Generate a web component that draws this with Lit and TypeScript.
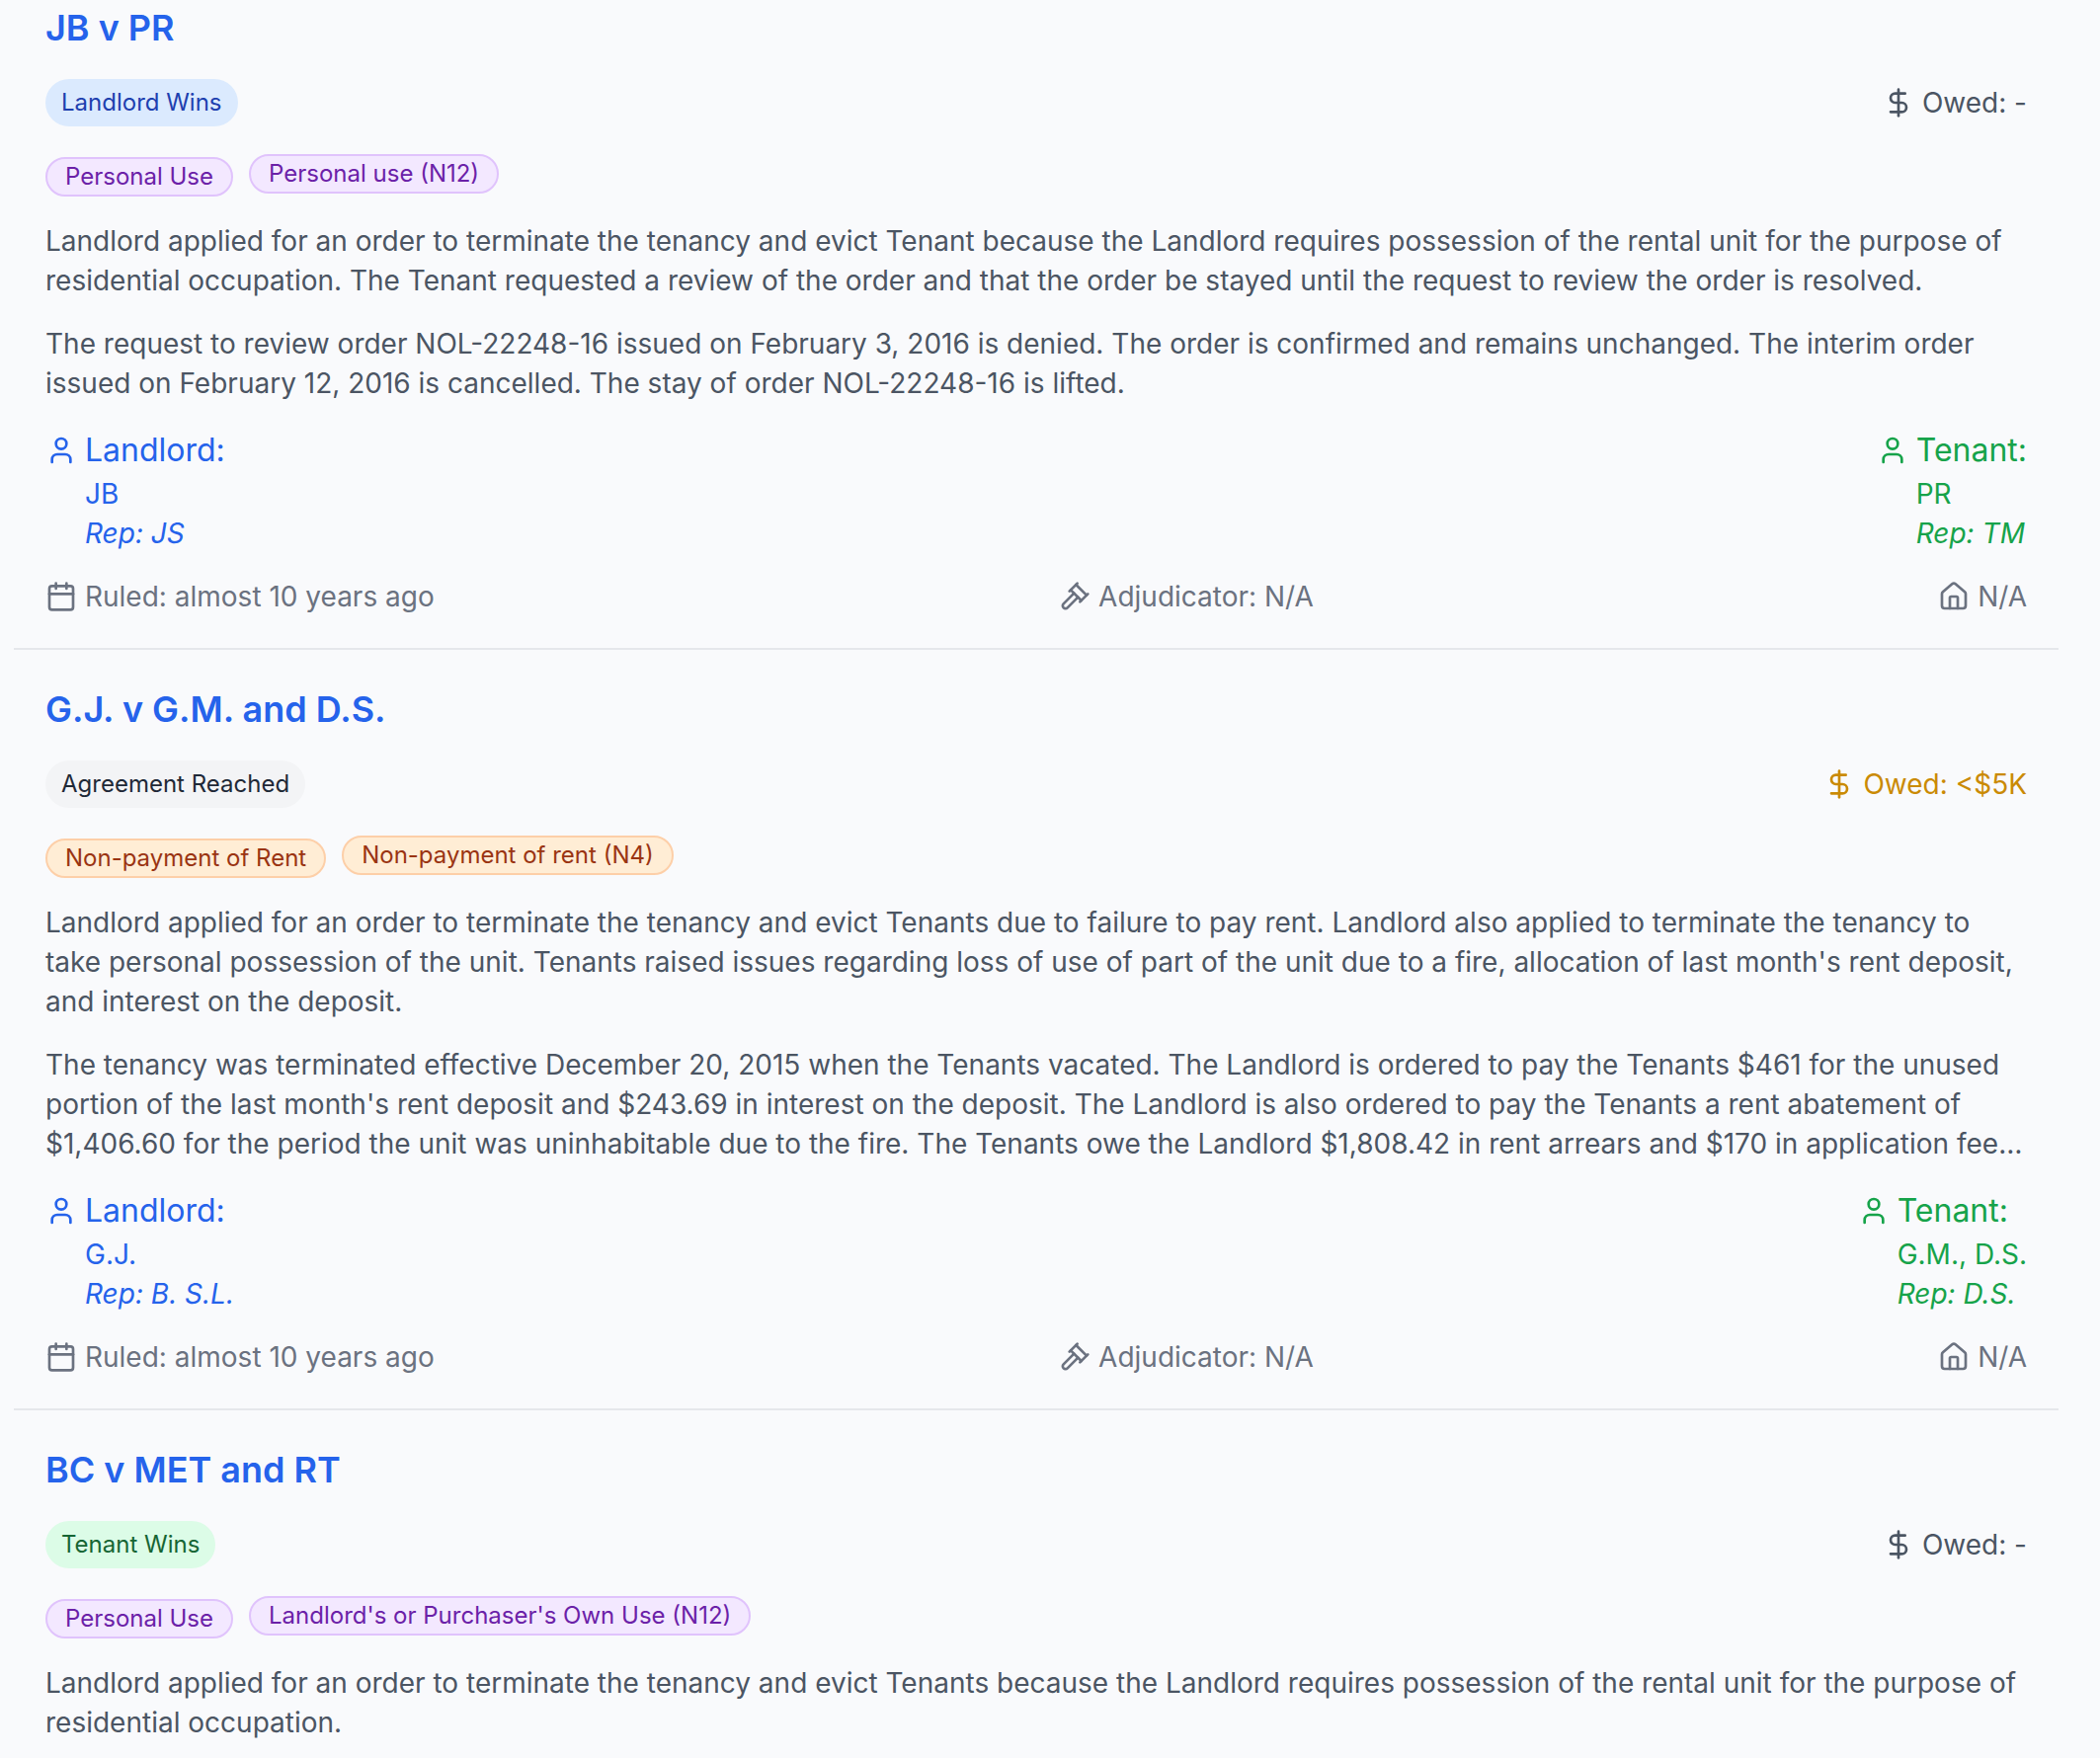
import { LitElement, html, css, svg, nothing } from "lit";
import { customElement, property } from "lit/decorators.js";
import { classMap } from "lit/directives/class-map.js";

type Tone = "blue" | "green" | "gray" | "purple" | "orange";

interface Party {
  names: string;
  rep: string;
}

interface Ruling {
  title: string;
  outcome: string;
  outcomeTone: Tone;
  owed: string;
  hasAmount: boolean;
  category: string;
  reason: string;
  tagTone: Tone;
  paragraphs: string[];
  landlord?: Party;
  tenant?: Party;
  ruled?: string;
  adjudicator?: string;
  location?: string;
}

const RULINGS: Ruling[] = [
  {
    title: "JB v PR",
    outcome: "Landlord Wins",
    outcomeTone: "blue",
    owed: "-",
    hasAmount: false,
    category: "Personal Use",
    reason: "Personal use (N12)",
    tagTone: "purple",
    paragraphs: [
      "Landlord applied for an order to terminate the tenancy and evict Tenant because the Landlord requires possession of the rental unit for the purpose of residential occupation. The Tenant requested a review of the order and that the order be stayed until the request to review the order is resolved.",
      "The request to review order NOL-22248-16 issued on February 3, 2016 is denied. The order is confirmed and remains unchanged. The interim order issued on February 12, 2016 is cancelled. The stay of order NOL-22248-16 is lifted.",
    ],
    landlord: { names: "JB", rep: "JS" },
    tenant: { names: "PR", rep: "TM" },
    ruled: "almost 10 years ago",
    adjudicator: "N/A",
    location: "N/A",
  },
  {
    title: "G.J. v G.M. and D.S.",
    outcome: "Agreement Reached",
    outcomeTone: "gray",
    owed: "<$5K",
    hasAmount: true,
    category: "Non-payment of Rent",
    reason: "Non-payment of rent (N4)",
    tagTone: "orange",
    paragraphs: [
      "Landlord applied for an order to terminate the tenancy and evict Tenants due to failure to pay rent. Landlord also applied to terminate the tenancy to take personal possession of the unit. Tenants raised issues regarding loss of use of part of the unit due to a fire, allocation of last month's rent deposit, and interest on the deposit.",
      "The tenancy was terminated effective December 20, 2015 when the Tenants vacated. The Landlord is ordered to pay the Tenants $461 for the unused portion of the last month's rent deposit and $243.69 in interest on the deposit. The Landlord is also ordered to pay the Tenants a rent abatement of $1,406.60 for the period the unit was uninhabitable due to the fire. The Tenants owe the Landlord $1,808.42 in rent arrears and $170 in application fee…",
    ],
    landlord: { names: "G.J.", rep: "B. S.L." },
    tenant: { names: "G.M., D.S.", rep: "D.S." },
    ruled: "almost 10 years ago",
    adjudicator: "N/A",
    location: "N/A",
  },
  {
    title: "BC v MET and RT",
    outcome: "Tenant Wins",
    outcomeTone: "green",
    owed: "-",
    hasAmount: false,
    category: "Personal Use",
    reason: "Landlord's or Purchaser's Own Use (N12)",
    tagTone: "purple",
    paragraphs: [
      "Landlord applied for an order to terminate the tenancy and evict Tenants because the Landlord requires possession of the rental unit for the purpose of residential occupation.",
    ],
  },
];

const ICONS = {
  dollar: svg`<path d="M12 2v20"/><path d="M17 5H9.5a3.5 3.5 0 0 0 0 7h5a3.5 3.5 0 0 1 0 7H6"/>`,
  user: svg`<path d="M19 21v-2a4 4 0 0 0-4-4H9a4 4 0 0 0-4 4v2"/><circle cx="12" cy="7" r="4"/>`,
  calendar: svg`<path d="M8 2v4"/><path d="M16 2v4"/><rect width="18" height="18" x="3" y="4" rx="2"/><path d="M3 10h18"/>`,
  gavel: svg`<path d="m14.5 12.5-8 8a2.119 2.119 0 1 1-3-3l8-8"/><path d="m16 16 6-6"/><path d="m8 8 6-6"/><path d="m9 7 8 8"/><path d="m21 11-8-8"/>`,
  home: svg`<path d="M15 21v-8a1 1 0 0 0-1-1h-4a1 1 0 0 0-1 1v8"/><path d="M3 10a2 2 0 0 1 .709-1.528l7-5.999a2 2 0 0 1 2.582 0l7 5.999A2 2 0 0 1 21 10v9a2 2 0 0 1-2 2H5a2 2 0 0 1-2-2z"/>`,
};

const icon = (name: keyof typeof ICONS) => html`<svg
  class="icon"
  viewBox="0 0 24 24"
  fill="none"
  stroke="currentColor"
  stroke-width="2"
  stroke-linecap="round"
  stroke-linejoin="round"
  aria-hidden="true"
>${ICONS[name]}</svg>`;

@customElement("ruling-item")
export class RulingItem extends LitElement {
  static styles = css`
    :host {
      display: block;
    }
    .item {
      display: flex;
      flex-direction: column;
      gap: 24px;
      padding: 32px;
    }
    .title {
      margin: 0;
      font-size: 36px;
      line-height: 56px;
      font-weight: 600;
    }
    .link {
      color: #2563eb;
      text-decoration: none;
    }
    .row {
      display: flex;
      justify-content: space-between;
      align-items: center;
    }
    .outcome {
      padding: 8px 16px;
      border-radius: 24px;
      font-size: 24px;
      line-height: 32px;
    }
    .with-icon {
      display: flex;
      align-items: center;
      gap: 8px;
    }
    .icon {
      width: 32px;
      height: 32px;
      flex: none;
    }
    .owed {
      color: #4b5563;
    }
    .owed.amount {
      color: #ca8a04;
    }
    .tags {
      display: flex;
      align-items: center;
      gap: 16px;
      font-size: 32px;
      line-height: 48px;
    }
    .category {
      height: 48px;
    }
    .tag {
      display: inline-block;
      padding: 0 18px;
      border: 2px solid;
      border-radius: 20px;
      font-size: 24px;
      line-height: 36px;
    }
    .blue {
      background: #dbeafe;
      color: #1e40af;
    }
    .green {
      background: #dcfce7;
      color: #166534;
    }
    .gray {
      background: #f3f4f6;
      color: #1f2937;
    }
    .purple {
      background: #f3e8ff;
      color: #6b21a8;
      border-color: #e0c3fc;
    }
    .orange {
      background: #ffedd5;
      color: #9a3412;
      border-color: #fdcfa8;
    }
    .text {
      margin: 0;
      color: #4b5563;
    }
    .landlord {
      color: #2563eb;
    }
    .tenant {
      color: #16a34a;
    }
    .role {
      font-size: 32px;
      line-height: 48px;
    }
    .names,
    .rep {
      padding-left: 40px;
    }
    .rep {
      font-style: italic;
    }
    .meta {
      color: #6b7280;
    }
  `;

  @property({ attribute: false }) ruling!: Ruling;

  private party(role: string, party: Party) {
    return html`
      <div class=${role.toLowerCase()}>
        <div class="with-icon role">${icon("user")}<span>${role}:</span></div>
        <div class="names">${party.names}</div>
        <div class="rep">Rep: ${party.rep}</div>
      </div>
    `;
  }

  render() {
    const r = this.ruling;
    return html`
      <article class="item">
        <h2 class="title"><a class="link" href="#">${r.title}</a></h2>
        <div class="row">
          <span class="outcome ${r.outcomeTone}">${r.outcome}</span>
          <span class=${classMap({ "with-icon": true, owed: true, amount: r.hasAmount })}>
            ${icon("dollar")}<span>Owed: ${r.owed}</span>
          </span>
        </div>
        <div class="tags">
          <div class="category"><span class="tag ${r.tagTone}">${r.category}</span></div>
          <span class="tag ${r.tagTone}">${r.reason}</span>
        </div>
        ${r.paragraphs.map((p) => html`<p class="text">${p}</p>`)}
        ${r.landlord && r.tenant
          ? html`<div class="row">
              ${this.party("Landlord", r.landlord)} ${this.party("Tenant", r.tenant)}
            </div>`
          : nothing}
        ${r.ruled
          ? html`<div class="row meta">
              <span class="with-icon">${icon("calendar")}<span>Ruled: ${r.ruled}</span></span>
              <span class="with-icon">${icon("gavel")}<span>Adjudicator: ${r.adjudicator}</span></span>
              <span class="with-icon">${icon("home")}<span>${r.location}</span></span>
            </div>`
          : nothing}
      </article>
    `;
  }
}

@customElement("app-root")
export class AppRoot extends LitElement {
  static styles = css`
    :host {
      display: block;
      box-sizing: border-box;
      height: 100vh;
      overflow: hidden;
      background: #f9fafc;
      font-family: Inter, "Liberation Sans", sans-serif;
      font-optical-sizing: none;
      font-size: 28px;
      line-height: 40px;
    }
    .list {
      list-style: none;
      margin: -32px 42px 0 14px;
      padding: 0;
    }
    .entry + .entry {
      border-top: 2px solid #e5e7eb;
    }
  `;

  render() {
    return html`
      <ul class="list">
        ${RULINGS.map((r) => html`<li class="entry"><ruling-item .ruling=${r}></ruling-item></li>`)}
      </ul>
    `;
  }
}
